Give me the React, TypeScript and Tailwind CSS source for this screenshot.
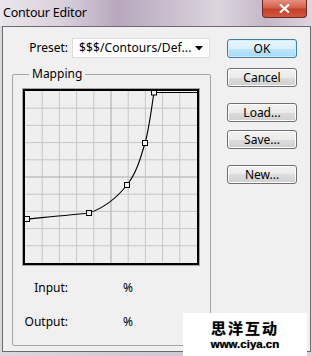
import React from "react";

const ui = { fontFamily: '"Noto Sans", "Open Sans", sans-serif' };

const points: [number, number][] = [
  [2, 128],
  [64, 122],
  [102, 94],
  [120, 52],
  [129, 1.5],
];

// courbe lissée (catmull-rom -> bezier), puis plat jusqu'au bord droit
const curve =
  "M2,128 C12,127 47,124 64,122 C80.7,116.3 92.7,105.7 102,94 C111.3,82.3 115.5,67.5 120,52 C124.5,36.5 127.5,9.5 129,1.5 L172,1.5";

function Button({ label, primary }: { label: string; primary?: boolean }) {
  return (
    <div
      className={
        primary
          ? "w-[70px] h-[19px] rounded-[3px] border border-[#3c7fb1] bg-[linear-gradient(#eaf6fd_0%,#d9f0fc_50%,#bee6fd_50%,#a7d9f5_100%)] shadow-[inset_0_0_0_1px_#d6ecf9] flex items-center justify-center text-[12px] text-black"
          : "w-[70px] h-[19px] rounded-[3px] border border-[#707070] bg-[linear-gradient(#f2f2f2_0%,#ebebeb_50%,#dddddd_50%,#cfcfcf_100%)] shadow-[inset_0_0_0_1px_#fcfcfc] flex items-center justify-center text-[12px] text-black"
      }
    >
      {label}
    </div>
  );
}

function Graph() {
  const steps = [1, 2, 3, 4, 5, 6, 7, 8, 9];
  return (
    <div className="w-fit ml-[9px] mt-[6px] border border-[#a3a3a3]">
      <div className="border-2 border-black bg-[#efefef]">
        <svg width={172} height={172} className="block">
          {steps.map((i) => (
            <g key={i}>
              <line
                x1={i * 17.2}
                x2={i * 17.2}
                y1={0}
                y2={172}
                stroke={i === 5 ? "#a8a8a8" : "#c6c6c6"}
                strokeWidth={1}
              />
              <line
                y1={i * 17.2}
                y2={i * 17.2}
                x1={0}
                x2={172}
                stroke={i === 5 ? "#a8a8a8" : "#c6c6c6"}
                strokeWidth={1}
              />
            </g>
          ))}
          <path d={curve} fill="none" stroke="#000" strokeWidth={1.1} />
          {points.map(([x, y], i) => (
            <rect
              key={i}
              x={x - 2.5}
              y={y - 2.5}
              width={5}
              height={5}
              fill="#f0f0f0"
              stroke="#000"
              strokeWidth={1}
            />
          ))}
        </svg>
      </div>
    </div>
  );
}

export default function App() {
  return (
    <div
      className="relative w-[312px] h-[356px] overflow-hidden bg-[linear-gradient(90deg,#ddd6df_0%,#d3cad6_40%,#cfc6d3_70%,#d8d2dc_100%)]"
      style={ui}
    >
      {/* barre de titre */}
      <div className="h-[26px] flex items-start bg-[linear-gradient(90deg,#eae6ec_0%,#d9d0dc_20%,#b7a8bd_38%,#cbbfcf_55%,#ddd5df_70%,#c5b8c9_85%,#dcd5de_100%)]">
        <span className="ml-[3px] mt-[4px] text-[12.5px] leading-[17px] text-black tracking-[-0.2px]">
          Contour Editor
        </span>
        <div className="ml-auto mr-[5px] w-[45px] h-[18px] rounded-b-[4px] border border-t-0 border-[#6a2a22] bg-[linear-gradient(#e2907f_0%,#d6604a_45%,#c4402a_55%,#d0573d_100%)] flex items-center justify-center">
          <svg width={11} height={9} viewBox="0 0 11 9">
            <path
              d="M1,0.5 L5.5,4.5 L10,0.5 M1,8.5 L5.5,4.5 L10,8.5"
              stroke="#fff"
              strokeWidth={2.2}
              fill="none"
            />
          </svg>
        </div>
      </div>

      {/* zone client */}
      <div className="ml-[2px] w-[309px] h-[326px] border border-[#6b6b6b] bg-[#f0f0f0] flex text-[12px] text-black">
        <div className="w-[208px]">
          <div className="mt-[11px] h-[20px] flex items-center">
            <span className="w-[65px] text-right">Preset:</span>
            <div className="ml-[4px] w-[138px] h-[20px] bg-white border border-[#dcdcdc] flex items-center pl-[6px] pr-[5px]">
              <span className="tracking-[0.1px]">$$$/Contours/Def...</span>
              <svg width={8} height={5} className="ml-auto mr-[1px]">
                <path d="M0,0 L8,0 L4,4.5 Z" fill="#000" />
              </svg>
            </div>
          </div>

          <div className="ml-[9px] mt-[16px] w-[199px] h-[272px] border border-[#a6a6a6] rounded-[2px]">
            <span className="block w-fit -mt-[9px] ml-[16px] px-[3px] h-[16px] leading-[16px] bg-[#f0f0f0]">
              Mapping
            </span>
            <Graph />
            <div className="mt-[14px] h-[16px] flex items-center">
              <span className="w-[55px] text-right">Input:</span>
              <span className="ml-[55px]">%</span>
            </div>
            <div className="mt-[18px] h-[16px] flex items-center">
              <span className="w-[55px] text-right">Output:</span>
              <span className="ml-[55px]">%</span>
            </div>
          </div>
        </div>

        <div className="pl-[16px] pt-[12px] flex flex-col">
          <Button label="OK" primary />
          <div className="mt-[10px]">
            <Button label="Cancel" />
          </div>
          <div className="mt-[16px]">
            <Button label="Load..." />
          </div>
          <div className="mt-[8px]">
            <Button label="Save..." />
          </div>
          <div className="mt-[16px]">
            <Button label="New..." />
          </div>
        </div>
      </div>

      {/* filigrane */}
      <div className="absolute right-[5px] bottom-0 w-[124px] h-[43px] bg-white flex flex-col items-center pt-[7px]">
        <span
          className="text-[15px] leading-[16px] font-bold tracking-[2px] text-black [text-shadow:0_0_1px_#777]"
          style={{ fontFamily: '"Noto Sans CJK SC", sans-serif' }}
        >
          思洋互动
        </span>
        <span
          className="mt-[2px] text-[11.5px] leading-[12px] font-bold text-black [text-shadow:0_0_1px_#555]"
          style={{ fontFamily: '"Liberation Sans", Arial, sans-serif' }}
        >
          www.ciya.cn
        </span>
      </div>
    </div>
  );
}
